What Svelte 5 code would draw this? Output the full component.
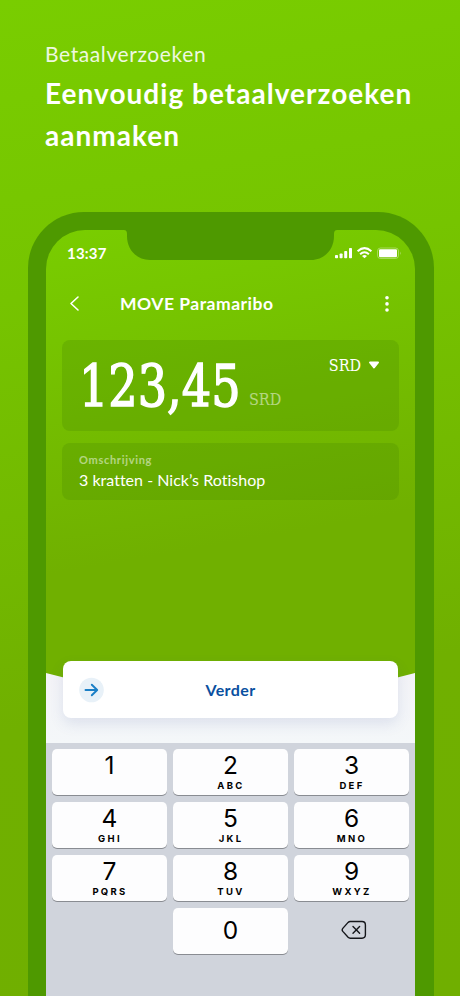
<script lang="ts">
	const keys = [
		{ digit: '1', letters: '' },
		{ digit: '2', letters: 'ABC' },
		{ digit: '3', letters: 'DEF' },
		{ digit: '4', letters: 'GHI' },
		{ digit: '5', letters: 'JKL' },
		{ digit: '6', letters: 'MNO' },
		{ digit: '7', letters: 'PQRS' },
		{ digit: '8', letters: 'TUV' },
		{ digit: '9', letters: 'WXYZ' }
	];

	let amount = $state('123,45');

	function press(digit: string) {
		amount += digit;
	}
	function erase() {
		amount = amount.slice(0, -1);
	}
</script>

<main>
	<header class="intro">
		<p>Betaalverzoeken</p>
		<h1>Eenvoudig betaalverzoeken<br />aanmaken</h1>
	</header>

	<div class="phone">
		<div class="screen">
			<svg class="notch" width="213" height="30" viewBox="0 0 213 30">
				<path d="M0 0H213Q210 0 210 4V6C210 20 200 30 187 30H26C13 30 3 20 3 6V4Q3 0 0 0Z" fill="#4e9900" />
			</svg>

			<div class="status">
				<span class="time">13:37</span>
				<svg width="67" height="14" viewBox="0 0 67 14" fill="#fff">
					<rect x="0" y="9" width="3" height="3.2" rx=".8" />
					<rect x="4.6" y="7.4" width="3" height="4.8" rx=".8" />
					<rect x="9.2" y="5" width="3" height="7.2" rx=".8" />
					<rect x="14" y="2" width="3" height="10.2" rx=".8" />
					<g fill="none" stroke="#fff" stroke-width="2">
						<path d="M22.6 5.2Q29.5 -1 36.4 5.2" />
						<path d="M25.1 8.2Q29.5 4.3 33.9 8.2" />
					</g>
					<path d="M27 9.9Q29.5 8.1 32 9.9L29.5 12.3Z" />
					<rect x="42.5" y="2" width="21" height="10.5" rx="3" fill="none" stroke="#fff" stroke-opacity=".35" />
					<rect x="44" y="3.3" width="18" height="8" rx="1.2" />
					<path d="M65 5.5Q66.3 7.2 65 9Z" opacity=".5" />
				</svg>
			</div>

			<nav>
				<svg width="12" height="18" viewBox="0 0 12 18" fill="none" stroke="#fff" stroke-width="1.6">
					<path d="M10 2L3 8.5L10 15" stroke-linecap="round" stroke-linejoin="round" />
				</svg>
				<h2>MOVE Paramaribo</h2>
				<svg width="6" height="18" viewBox="0 0 6 18" fill="#fff">
					<circle cx="3" cy="2.7" r="1.8" />
					<circle cx="3" cy="8.9" r="1.8" />
					<circle cx="3" cy="15" r="1.8" />
				</svg>
			</nav>

			<section class="field amount">
				<span class="value">{amount}</span>
				<span class="unit">SRD</span>
				<button class="currency">
					<span>SRD</span>
					<svg width="12" height="9" viewBox="0 0 12 9">
						<path d="M2 1.5H10L6 6.5Z" fill="#fff" stroke="#fff" stroke-width="2" stroke-linejoin="round" />
					</svg>
				</button>
			</section>

			<section class="field description">
				<span class="label">Omschrijving</span>
				<span class="text">3 kratten - Nick’s Rotishop</span>
			</section>

			<div class="bottom">
				<svg class="curve" width="369" height="83" viewBox="0 0 369 83">
					<defs>
						<linearGradient id="sheet" x1="0" y1="0" x2="0" y2="1">
							<stop offset="0" stop-color="#f3f3f7" />
							<stop offset="1" stop-color="#f4f7f9" />
						</linearGradient>
					</defs>
					<path d="M0 13Q184.5 63 369 13V83H0Z" fill="url(#sheet)" />
				</svg>
				<button class="next">
					<svg width="26" height="26" viewBox="0 0 26 26">
						<circle cx="12.5" cy="13" r="12.3" fill="#e8f1f8" />
						<path d="M6.5 13H18M12.8 7.7L18.2 13L12.8 18.3" fill="none" stroke="#1a7fc6" stroke-width="1.9" stroke-linecap="round" stroke-linejoin="round" />
					</svg>
					<span>Verder</span>
				</button>
			</div>

			<div class="keypad">
				{#each keys as key}
					<button class="key" onclick={() => press(key.digit)}>
						<span class="digit">{key.digit}</span>
						<span class="letters">{key.letters}</span>
					</button>
				{/each}
				<span></span>
				<button class="key zero" onclick={() => press('0')}>
					<span class="digit">0</span>
				</button>
				<button class="erase" aria-label="Wissen" onclick={erase}>
					<svg width="26" height="20" viewBox="0 0 26 20" fill="none" stroke="#14161a" stroke-width="1.4" stroke-linejoin="round" stroke-linecap="round">
						<path d="M9.2 1.5H21Q24.4 1.5 24.4 4.9V14.8Q24.4 18.2 21 18.2H9.2Q8 18.2 7.1 17.3L1.8 11.4Q.6 9.9 1.8 8.4L7.1 2.4Q8 1.5 9.2 1.5Z" />
						<path d="M12 6.4L18.6 13.2M18.6 6.4L12 13.2" />
					</svg>
				</button>
			</div>
		</div>
	</div>
</main>

<style>
	:global(body) {
		margin: 0;
	}
	main {
		box-sizing: border-box;
		width: 460px;
		height: 996px;
		overflow: hidden;
		background: linear-gradient(170deg, #79cd00 0%, #76c400 28%, #70b000 68%, #70af00 100%);
		font-family: Lato, 'Open Sans', sans-serif;
		font-variant-ligatures: none;
		color: #fff;
	}
	button {
		border: 0;
		padding: 0;
		margin: 0;
		background: none;
		color: inherit;
		font: inherit;
	}
	.intro {
		box-sizing: border-box;
		height: 212px;
		padding: 40px 0 0 45px;
		white-space: nowrap;
	}
	.intro p {
		margin: 0;
		font-size: 21px;
		line-height: 28px;
		letter-spacing: 0.6px;
		opacity: 0.88;
	}
	.intro h1 {
		margin: 4px 0 0;
		font-size: 28px;
		line-height: 42px;
		font-weight: 700;
		letter-spacing: 1.03px;
	}
	.phone {
		box-sizing: border-box;
		width: 406px;
		height: 860px;
		margin-left: 28px;
		padding: 18px 19px 0 18px;
		border-radius: 56px 56px 0 0;
		background: #4e9900;
	}
	.screen {
		position: relative;
		display: flex;
		flex-direction: column;
		height: 842px;
		border-radius: 39px 39px 0 0;
		overflow: hidden;
		background: linear-gradient(170deg, #79cd00 0, #76c400 110px, #70b000 340px, #70b000 100%);
	}
	.notch {
		position: absolute;
		top: 0;
		left: 78px;
	}
	.status {
		display: flex;
		justify-content: space-between;
		height: 30px;
		padding: 13px 13px 0 21px;
	}
	.status svg {
		margin-top: 3px;
	}
	.time {
		font-size: 15px;
		line-height: 20px;
		font-weight: 700;
		letter-spacing: 0.2px;
	}
	nav {
		display: flex;
		align-items: center;
		height: 26px;
		padding: 0 25px 0 22px;
		margin-top: 18px;
	}
	nav h2 {
		flex: 1;
		margin: 0 0 0 40px;
		font-size: 17.5px;
		line-height: 26px;
		font-weight: 700;
		letter-spacing: 0.5px;
	}
	.field {
		box-sizing: border-box;
		display: flex;
		margin: 0 16px;
		border-radius: 8px;
		background: rgba(75, 140, 0, 0.28);
	}
	.amount {
		height: 91px;
		margin-top: 23px;
		padding: 0 19px 0 17px;
		font-family: 'Roboto Slab', 'DejaVu Serif Condensed', 'DejaVu Serif', serif;
		font-stretch: condensed;
	}
	.value {
		width: 170px;
		font-size: 58px;
		line-height: 92px;
		white-space: nowrap;
		-webkit-text-stroke: 1.4px #fff;
		transform: scaleX(0.885);
		transform-origin: left;
	}
	.unit {
		margin-top: 49px;
		font-size: 16px;
		line-height: 22px;
		opacity: 0.5;
	}
	.currency {
		display: flex;
		align-items: center;
		gap: 7px;
		height: 22px;
		margin: 14px 0 0 auto;
		font-size: 16px;
	}
	.description {
		flex-direction: column;
		height: 57px;
		margin-top: 12px;
		padding: 8px 17px 0;
	}
	.label {
		font-size: 11px;
		line-height: 17px;
		font-weight: 700;
		letter-spacing: 0.7px;
		opacity: 0.5;
	}
	.text {
		font-size: 16px;
		line-height: 23px;
		letter-spacing: 0.02px;
	}
	.bottom {
		display: grid;
		height: 83px;
		margin-top: 160px;
	}
	.curve,
	.next {
		grid-area: 1 / 1;
	}
	.next {
		position: relative;
		display: flex;
		align-items: center;
		height: 57px;
		margin: 1px 17px 0;
		padding: 0 16px;
		border-radius: 8px;
		background: #fff;
		box-shadow: 0 6px 14px rgba(70, 90, 160, 0.13);
		color: #0a50a0;
		font-size: 16px;
		font-weight: 700;
		letter-spacing: 0.4px;
	}
	.next span {
		flex: 1;
		padding-right: 26px;
	}
	.keypad {
		display: grid;
		grid-template-columns: repeat(3, 115px);
		grid-auto-rows: 46px;
		align-content: start;
		gap: 7px 6px;
		flex: 1;
		padding: 6px 6px 0;
		background: #d0d4dc;
		font-family: Inter, sans-serif;
		color: #000;
	}
	.key {
		display: flex;
		flex-direction: column;
		align-items: center;
		border-radius: 5px;
		background: #fdfdfe;
		box-shadow: 0 1px 0 #898c92;
	}
	.digit {
		margin-top: 2px;
		font-size: 24.5px;
		line-height: 29px;
	}
	.letters {
		margin-left: 1px;
		font-size: 9.5px;
		line-height: 11px;
		font-weight: 700;
		letter-spacing: 2.3px;
	}
	.zero .digit {
		margin-top: 8px;
	}
	.erase {
		display: flex;
		align-items: center;
		justify-content: center;
		padding: 0 0 3px 5px;
	}
</style>
